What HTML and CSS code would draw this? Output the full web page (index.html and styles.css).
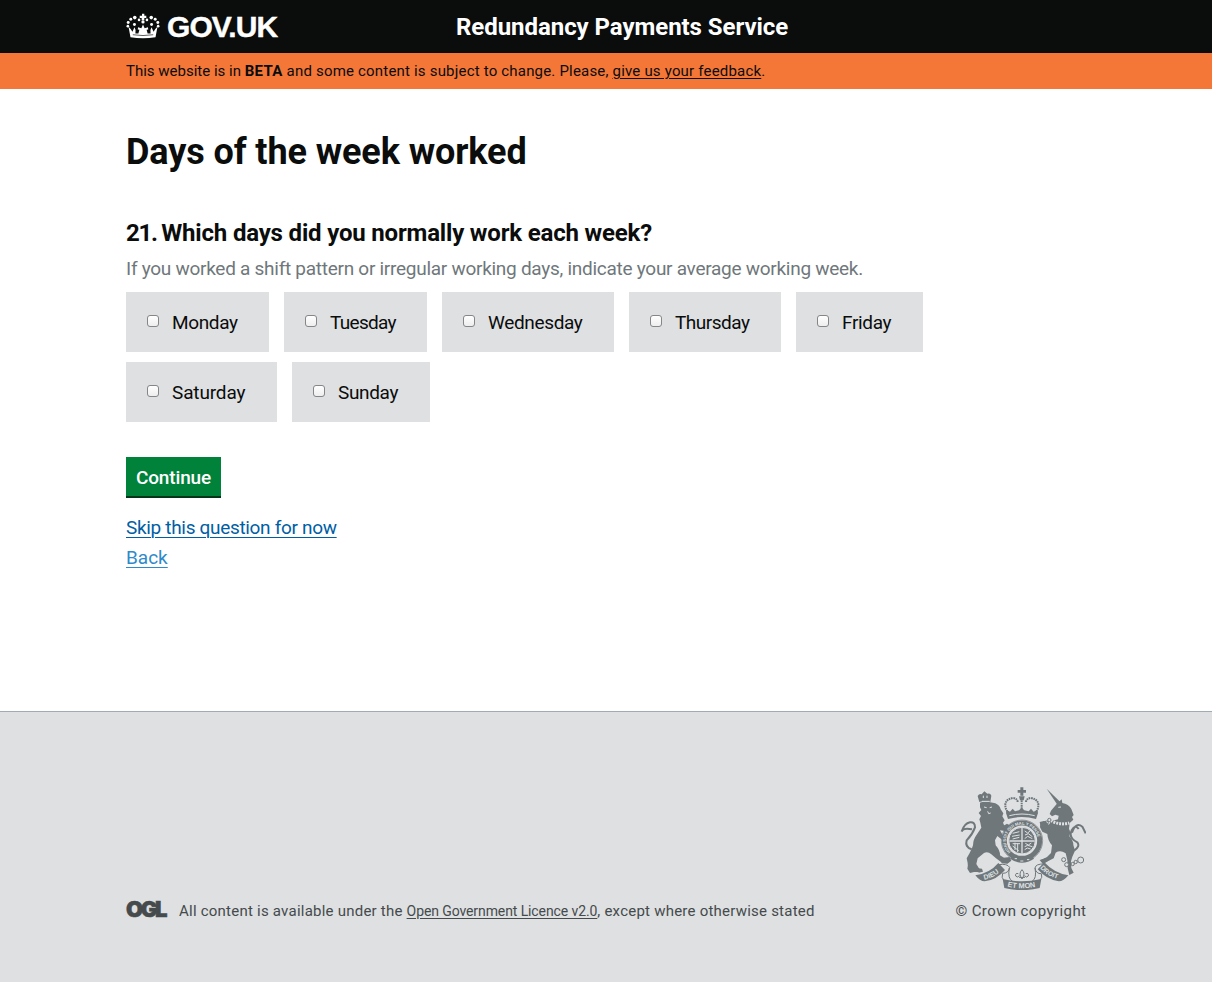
FILE: index.html
```html
<!DOCTYPE html>
<html lang="en">
<head>
<meta charset="utf-8">
<title>Days of the week worked - Redundancy Payments Service</title>
<link rel="stylesheet" href="styles.css">
</head>
<body>
<header class="header">
  <div class="wrap header-inner">
    <a class="logo" href="#">
      <svg class="crown" viewBox="0 0 102 82" aria-hidden="true">
        <g fill="#fff">
          <path d="M13 74 L7 42 Q14 48 19 57 L25 43 Q31 52 28 62 L37 62 L40 51 L35 50 L36 43 L46 46 L51 35 L56 46 L66 43 L67 50 L62 51 L65 62 L74 62 Q71 52 77 43 L83 57 Q88 48 95 42 L89 74 Q51 80 13 74Z"/>
          <path d="M48 2h7v6h6v7h-6v7h-8v-7h-6V8h7z"/>
          <circle cx="51" cy="27" r="5"/>
          <circle cx="39" cy="21" r="4"/><circle cx="63" cy="21" r="4"/>
          <circle cx="26" cy="14" r="5.5"/><circle cx="76" cy="14" r="5.5"/>
          <circle cx="14" cy="19" r="4.5"/><circle cx="88" cy="19" r="4.5"/>
          <circle cx="6" cy="29" r="4.5"/><circle cx="96" cy="29" r="4.5"/>
          <circle cx="5" cy="40" r="4"/><circle cx="97" cy="40" r="4"/>
          <circle cx="25" cy="35" r="4.5"/><circle cx="77" cy="35" r="4.5"/>
        </g>
        <path d="M20 66 Q51 71 82 66" fill="none" stroke="#0b0c0c" stroke-width="2"/>
      </svg>
      <span class="logo-text">GOV.UK</span>
    </a>
    <a class="service" href="#">Redundancy Payments Service</a>
  </div>
</header>
<div class="banner">
  <p class="wrap banner-text"><span class="intro">This website is in </span><strong>BETA</strong> and some content is subject to change. Please, <a href="#">give us your feedback</a>.</p>
</div>
<main class="wrap main">
  <h1 class="title">Days of the week worked</h1>
  <form class="form">
    <h2 class="question"><span class="number">21. </span>Which days did you normally work each week?</h2>
    <p class="hint">If you worked a shift pattern or irregular working days, indicate your average working week.</p>
    <div class="options">
      <label class="option monday"><input class="check" type="checkbox"><span>Monday</span></label>
      <label class="option tuesday"><input class="check" type="checkbox"><span>Tuesday</span></label>
      <label class="option wednesday"><input class="check" type="checkbox"><span>Wednesday</span></label>
      <label class="option thursday"><input class="check" type="checkbox"><span>Thursday</span></label>
      <label class="option friday"><input class="check" type="checkbox"><span>Friday</span></label>
      <label class="option saturday"><input class="check" type="checkbox"><span>Saturday</span></label>
      <label class="option sunday"><input class="check" type="checkbox"><span>Sunday</span></label>
    </div>
    <button class="button" type="button">Continue</button>
    <div class="links">
      <a class="skip" href="#">Skip this question for now</a>
      <a class="back" href="#">Back</a>
    </div>
  </form>
</main>
<footer class="footer">
  <div class="wrap footer-inner">
    <div class="licence">
      <span class="ogl">OGL</span>
      <p class="licence-text">All content is available under the <a href="#">Open Government Licence v2.0</a>, except where otherwise stated</p>
    </div>
    <div class="copyright">
      <svg class="crest" viewBox="30 18 378 312" aria-hidden="true">
        <defs>
          <path id="garter" d="M182 216 A48 48 0 1 1 250 216"/>
          <path id="left-scroll" d="M103 299 Q134 294 158 266"/>
          <path id="mid-scroll" d="M172 319 Q216 331 264 319"/>
          <path id="right-scroll" d="M270 264 Q294 293 338 300"/>
        </defs>
        <g class="ink">
          <!-- lion -->
          <path d="M88 66 L83 48 Q88 40 95 43 L103 34 L112 41 Q121 38 124 47 L121 66 Q104 60 88 66Z"/>
          <path d="M90 68 Q106 62 121 67 L136 70 Q150 76 152 88 L160 100 L157 109 L164 121 L159 128 L163 137 Q172 133 178 140 L181 147 Q174 154 164 153 L150 151 L158 165 L172 170 L170 179 L157 180 L142 168 L135 181 L137 196 Q151 212 150 226 L163 234 L180 240 L174 250 L154 247 L138 235 L124 223 Q113 213 102 219 L83 235 L79 252 L90 270 L84 277 L67 266 L61 274 L54 266 L53 249 L50 235 L59 219 L66 204 L69 196 Q69 179 81 163 L94 143 L91 128 L88 118 L93 108 L86 99 L94 90 L90 82Z"/>
          <path d="M153 244l8-11 18-2 5 11-12 9-17-1zM55 252l9-5 19 17 3 12-14 0-12 3-8-13zM80 264l16 2 3 9-13 3zM158 139l13-8 12 8-4 9-20 2z"/>
          <!-- unicorn -->
          <path d="M290 26 L334 69 L324 77Z"/>
          <path d="M320 72 L335 58 L337 69 Q356 72 364 87 L371 105 L366 111 L370 119 L359 129 L357 147 Q363 155 358 169 Q370 181 370 195 L375 212 L367 230 L363 244 L364 264 L371 278 L358 285 L353 265 L352 240 L347 220 Q331 209 317 218 L311 235 L295 243 L279 250 L272 241 L291 231 L303 219 L306 196 Q293 181 292 162 L277 155 L270 142 L272 128 L286 122 L297 136 L302 124 L324 118 L326 107 L316 104 L306 109 L299 102 L303 92 Z"/>
          <path d="M286 150l-14-9-3-15 13-3 12 12 12-6 12 17-12 18zM269 240l17-5 7 9-14 9z"/>
          <!-- central crown -->
          <path d="M168 99 L170 90 L180 95 L188 86 L195 94 L207 91 L215 83 L223 91 L236 94 L243 86 L251 95 L262 90 L264 99 L258 117 Q215 105 174 117Z"/>
          <path d="M211 22h9v8h8v8h-8v9h-9v-9h-8v-8h8zM207 49h17l-3 12h-11z"/>
        </g>
        <path class="cut" d="M102 81l8 2M119 83l7-2M113 94l3 7 6-2M96 64h23M100 47v7M111 47v7M325 82l8-1M178 107Q216 97 254 107"/>
        <g class="lines">
          <path d="M203 66q-1-11-15-12q-29 6-20 33l5 10M228 66q1-11 15-12q29 6 20 33l-5 10" class="beads"/>
          <path d="M215 61v30" class="beads"/>
          <path d="M65 208Q44 202 50 181Q68 162 75 142Q75 125 60 127Q43 130 35 155M66 148Q44 143 37 151" class="tail"/>
          <path d="M373 211Q391 199 382 187Q354 173 365 151Q376 132 386 147M366 158Q378 124 397 140L407 160" class="tail"/>
          <path d="M302 121 Q329 137 358 129" class="collar"/>
          <circle cx="298" cy="120" r="5"/><circle cx="290" cy="128" r="5"/>
          <circle cx="341" cy="239" r="6" class="link"/><circle cx="350" cy="254" r="6" class="link"/><circle cx="368" cy="252" r="5"/><circle cx="377" cy="246" r="5"/><circle cx="392" cy="240" r="9"/>
        </g>
        <!-- garter and shield -->
        <circle class="ring" cx="216" cy="182" r="53"/>
        <circle class="ring-edge" cx="216" cy="182" r="62"/>
        <circle class="shield" cx="216" cy="182" r="40"/>
        <g class="shield-lines">
          <path d="M216 144v77M178 183h76"/>
          <path class="detail" d="M188 160l20-5M186 169l23-4M188 177l20-5M224 153l9 6 8-7M225 165l10-4 12 9M224 176l9-7 14 7M188 191h22M188 198l18 14M195 188v22M203 190v26M226 190l9 5 9-6M224 200l9-4 14 4M224 209l8-5 10 3"/>
        </g>
        <text class="motto ring-text"><textPath href="#garter">HONI SOIT QUI MAL Y PENSE</textPath></text>
        <path class="ink" d="M188 224q27 19 56 0l8 12q-36 24-72 0z"/>
        <path class="cut" d="M194 236h7M211 243h9M231 239h7"/>
        <!-- scroll -->
        <path class="ink" d="M76 286Q119 280 145 249L165 270Q140 300 104 304Q90 304 76 286ZM355 286Q313 280 283 247L263 268Q290 299 326 304Q341 304 355 286ZM158 297Q216 311 274 297L269 324Q216 337 163 324Z"/>
        <path class="scroll-edge" d="M147 254Q171 250 179 262Q176 280 158 280Q153 293 162 302M283 252Q257 251 255 264Q258 282 274 281Q279 292 269 302M178 264Q172 297 188 304M255 264Q261 296 246 304"/>
        <text class="motto"><textPath href="#left-scroll">DIEU</textPath></text>
        <text class="motto wide"><textPath href="#mid-scroll">ET MON</textPath></text>
        <text class="motto droit"><textPath href="#right-scroll">DROIT</textPath></text>
        <path class="scroll-edge" d="M216 269q-12 12 0 28q12-16 0-28M205 281q-10-3-8 7q4 7 12-1M227 281q10-3 8 7q-4 7-12-1M207 292h18"/>
      </svg>
      <a class="copyright-text" href="#">© Crown copyright</a>
    </div>
  </div>
</footer>
</body>
</html>
```
FILE: styles.css
```css
* { box-sizing: border-box; }
body { margin: 0; background: #fff; color: #0b0c0c; font: 19px/25px Roboto, "Liberation Sans", sans-serif; }
h1, h2, p { margin: 0; }
.wrap { width: 960px; margin: 0 auto; }
.header { height: 53px; background: #0b0c0c; }
.header-inner { display: flex; align-items: center; height: 53px; }
.logo { display: flex; width: 330px; align-items: center; color: #fff; text-decoration: none; }
.crown { width: 34px; height: 27px; margin-right: 7px; }
.logo-text { font: bold 30px/34px "Liberation Sans", Arial, sans-serif; letter-spacing: -0.9px; -webkit-text-stroke: 0.4px #fff; }
.service { padding-top: 1px; color: #fff; font-size: 24px; font-weight: 700; letter-spacing: -0.05px; text-decoration: none; }
.banner { height: 36px; background: #f47738; }
.banner-text { font-size: 15px; line-height: 36px; letter-spacing: 0.19px; }
.intro { letter-spacing: 0; }
.banner strong { letter-spacing: 0.3px; }
.banner a { color: #0b0c0c; text-underline-offset: 2px; }
.main { height: 622px; padding-top: 42px; }
.title { font-size: 36px; line-height: 42px; font-weight: 700; letter-spacing: -0.1px; }
.question { margin-top: 45px; font-size: 24px; line-height: 30px; font-weight: 700; letter-spacing: -0.18px; }
.number { letter-spacing: -1.3px; }
.hint { margin-top: 8px; color: #6f777b; letter-spacing: -0.272px; }
.options { display: flex; flex-wrap: wrap; gap: 10px 15px; margin-top: 11px; width: 820px; letter-spacing: -0.35px; }
.option { display: flex; align-items: center; height: 60px; padding-left: 21px; background: #dee0e2; white-space: nowrap; }
.check { appearance: none; flex: none; width: 12px; height: 12px; margin: 0 13px 2px 0; border: 1px solid #858687; border-radius: 3px; background: linear-gradient(#fff, #eee); }
.monday, .tuesday { width: 143px; }
.tuesday { letter-spacing: -0.7px; }
.wednesday { width: 172px; }
.thursday { width: 152px; letter-spacing: -0.5px; }
.friday { width: 127px; }
.saturday { width: 151px; letter-spacing: -0.15px; }
.sunday { width: 138px; }
.button { display: block; width: 95px; height: 41px; margin-top: 35px; padding: 0; border: 0; border-radius: 0; background: #00823b; box-shadow: inset 0 -2px #003618; color: #fff; font: 500 19px/41px Roboto, sans-serif; letter-spacing: -0.15px; }
.links { display: flex; flex-direction: column; align-items: flex-start; gap: 5px; margin-top: 17px; }
.links a { text-underline-offset: 3px; text-decoration-thickness: 1px; }
.skip { color: #005ea5; letter-spacing: -0.32px; }
.back { color: #2e8aca; }
.footer { height: 271px; border-top: 1px solid #a1acb2; background: #dee0e2; color: #454a4c; font-size: 15px; line-height: 20px; }
.footer-inner { display: flex; justify-content: space-between; align-items: flex-end; height: 209px; }
.footer a { color: #454a4c; }
.licence { display: flex; align-items: flex-end; }
.ogl { width: 41px; margin-right: 12px; padding-bottom: 2px; font: 900 22px/20px Inter, sans-serif; letter-spacing: -2.3px; -webkit-text-stroke: 0.6px #454a4c; }
.licence-text { letter-spacing: 0.23px; white-space: nowrap; }
.licence-text a { font-size: 14px; letter-spacing: -0.1px; text-underline-offset: 2px; }
.copyright { display: flex; flex-direction: column; align-items: flex-end; }
.crest { display: block; width: 126px; height: 104px; margin-bottom: 11px; }
.footer .copyright-text { margin-right: -0.4px; letter-spacing: 0.4px; text-decoration: none; }
.ink { fill: #6f777b; }
.cut { fill: none; stroke: #dee0e2; stroke-width: 3; }
.lines, .scroll-edge { fill: none; stroke: #6f777b; stroke-width: 3; }
.beads { stroke-width: 6; stroke-dasharray: 5 2; }
.tail { stroke-width: 6; }
.link { fill: #dee0e2; }
.collar { stroke: #dee0e2; stroke-width: 9; stroke-dasharray: 6 3; }
.ring { fill: #dee0e2; stroke: #6f777b; stroke-width: 15; }
.ring-edge { fill: none; stroke: #6f777b; stroke-width: 2; }
.shield { fill: #6f777b; stroke: #dee0e2; stroke-width: 3; }
.shield-lines { fill: none; stroke: #dee0e2; stroke-width: 4; }
.detail { stroke-width: 3; }
.motto { fill: #dee0e2; font: bold 21px "Liberation Sans", sans-serif; }
.ring-text { font-size: 12.5px; }
.droit { font-size: 20px; }
.wide { font-size: 22px; }
```
